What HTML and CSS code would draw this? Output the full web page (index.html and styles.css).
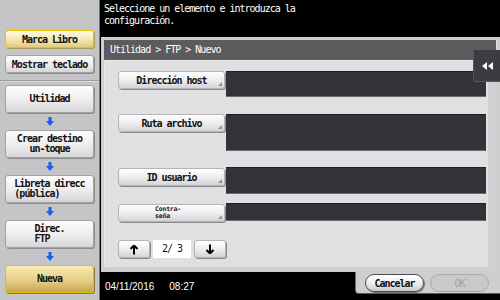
FILE: index.html
```html
<!DOCTYPE html>
<html lang="es">
<head>
<meta charset="utf-8">
<title>FTP Nuevo</title>
<link rel="stylesheet" href="styles.css">
</head>
<body>
<div class="screen">
  <aside class="side">
    <div class="side-top">
      <div class="sbtn yellow small">Marca Libro</div>
      <div class="sbtn small">Mostrar teclado</div>
    </div>
    <div class="side-flow">
      <div class="sbtn tall"><span>Utilidad</span></div>
      <svg class="flow-arrow" width="8" height="9" viewBox="0 0 8 9"><path d="M2.5 0h3v4H8L4 9 0 4h2.5z"/></svg>
      <div class="sbtn tall"><span>Crear destino<br>un-toque</span></div>
      <svg class="flow-arrow" width="8" height="9" viewBox="0 0 8 9"><path d="M2.5 0h3v4H8L4 9 0 4h2.5z"/></svg>
      <div class="sbtn tall"><span class="left">Libreta direcc<br>(pública)</span></div>
      <svg class="flow-arrow" width="8" height="9" viewBox="0 0 8 9"><path d="M2.5 0h3v4H8L4 9 0 4h2.5z"/></svg>
      <div class="sbtn tall"><span class="left">Direc.<br>FTP</span></div>
      <svg class="flow-arrow" width="8" height="9" viewBox="0 0 8 9"><path d="M2.5 0h3v4H8L4 9 0 4h2.5z"/></svg>
      <div class="sbtn tall current"><span>Nueva</span></div>
    </div>
  </aside>
  <main class="main">
    <div class="msg">Seleccione un elemento e introduzca la<br>configuración.</div>
    <section class="frame">
      <div class="title">Utilidad &gt; FTP &gt; Nuevo</div>
      <div class="content">
        <div class="rows">
          <div class="row r1"><div class="kbtn">Dirección host</div><div class="field f1"></div></div>
          <div class="row r2"><div class="kbtn">Ruta archivo</div><div class="field f2"></div></div>
          <div class="row r3"><div class="kbtn">ID usuario</div><div class="field f3"></div></div>
          <div class="row r4"><div class="kbtn tiny"><span>Contra-</span><span>seña</span></div><div class="field f4"></div></div>
          <div class="pager">
            <div class="pbtn"><svg width="10" height="11" viewBox="0 0 10 11"><path d="M5 1.5 1.5 5M5 1.5 8.5 5M5 1.5V10.5" fill="none" stroke="#000" stroke-width="2"/></svg></div>
            <div class="pnum">2/ 3</div>
            <div class="pbtn"><svg width="10" height="11" viewBox="0 0 10 11"><path d="M5 9.5 1.5 6M5 9.5 8.5 6M5 9.5V0.5" fill="none" stroke="#000" stroke-width="2"/></svg></div>
          </div>
        </div>
        <div class="gutter"></div>
      </div>
      <div class="tab"><svg width="11" height="8" viewBox="0 0 11 8"><path d="M0 4 5 0v8zM6 4l5-4v8z" fill="#fff"/></svg></div>
    </section>
    <footer class="foot">
      <div class="status"><span>04/11/2016</span><span>08:27</span></div>
      <div class="actions">
        <div class="pill">Cancelar</div>
        <div class="pill off">OK</div>
      </div>
    </footer>
  </main>
</div>
</body>
</html>
```
FILE: styles.css
```css
* { box-sizing: border-box; }
html, body { margin: 0; padding: 0; }
body {
  width: 500px;
  height: 300px;
  overflow: hidden;
  background: #000;
  font-family: "DejaVu Sans Mono", "Liberation Mono", monospace;
}
.screen {
  display: flex;
  width: 500px;
  height: 300px;
}

/* sidebar */
.side {
  width: 100px;
  height: 300px;
  background: #c5c5c7;
  border-right: 1px solid #77767a;
  display: flex;
  flex-direction: column;
}
.side-top {
  display: flex;
  flex-direction: column;
  gap: 7px;
  padding: 30px 0 0 5px;
  height: 81px;
  border-bottom: 1px solid #9c9c9e;
  box-shadow: 0 1px 0 #dcdcde;
}
.side-flow {
  display: flex;
  flex-direction: column;
  align-items: center;
  padding: 4px 5px 0 5px;
  gap: 4px;
}
.sbtn {
  width: 89px;
  border: 1px solid #a2a2a4;
  border-radius: 3px;
  background: linear-gradient(#fdfdfd, #ededee 55%, #d6d6d8);
  box-shadow: 1px 1px 0 #8e8e90;
  color: #111;
  font-weight: bold;
  font-size: 10px;
  letter-spacing: -1px;
  display: flex;
  align-items: center;
  justify-content: center;
  text-align: center;
  white-space: nowrap;
}
.sbtn.small { height: 18px; }
.sbtn.tall { height: 28px; line-height: 10px; }
.sbtn .left { text-align: left; }
.sbtn.yellow {
  border: 1px solid #e8c400;
  background: linear-gradient(#fffbe4, #f3e6b4 55%, #e2cc80);
  box-shadow: 1px 1px 0 #a89a60;
}
.sbtn.current {
  border: 1px solid #e6c000;
  background: linear-gradient(#f8eab0, #e6cf86 55%, #c8a850);
  box-shadow: 1px 1px 0 #8a7a40;
}
.flow-arrow { fill: #1b5ce8; display: block; }

/* main */
.main {
  width: 400px;
  height: 300px;
  display: flex;
  flex-direction: column;
}
.msg {
  height: 37px;
  padding: 3px 0 0 4px;
  color: #fff;
  font-size: 10px;
  line-height: 12px;
  letter-spacing: -1px;
  white-space: nowrap;
}
.frame {
  position: relative;
  margin-left: 1px;
  height: 235px;
  background: #cfcfd1;
  padding: 3px 3px 5px 3px;
  display: flex;
  flex-direction: column;
}
.title {
  height: 20px;
  background: #5c5b5e;
  border-right: 1px solid #e0e0e0;
  color: #fff;
  font-size: 10px;
  line-height: 20px;
  letter-spacing: -1px;
  padding-left: 6px;
}
.content {
  height: 207px;
  background: #e0dfe1;
  border-top: 1px solid #ececee;
  display: flex;
}
.rows {
  flex: 1;
  padding: 10px 0 0 13px;
  display: flex;
  flex-direction: column;
  border-left: 1px solid #ececee;
}
.row {
  display: flex;
  align-items: flex-start;
  gap: 1px;
}
.r2 { margin-top: 17px; }
.r3 { margin-top: 16px; }
.r4 { margin-top: 9px; }
.kbtn {
  position: relative;
  width: 107px;
  height: 18px;
  border: 1px solid #b4b4b6;
  border-radius: 3px;
  background: linear-gradient(#fefefe, #ececee 55%, #d4d4d6);
  box-shadow: 1px 1px 0 #8a8a8c;
  color: #111;
  font-weight: bold;
  font-size: 10px;
  letter-spacing: -1px;
  display: flex;
  align-items: center;
  justify-content: center;
  white-space: nowrap;
}
.kbtn::after {
  content: "";
  position: absolute;
  right: 2px;
  bottom: 2px;
  border-style: solid;
  border-width: 0 0 4px 4px;
  border-color: transparent transparent #8e8e90 transparent;
}
.r3 .kbtn { margin-top: 1px; }
.r4 .kbtn { margin-top: 1px; }
.kbtn.tiny {
  font-size: 6.5px;
  line-height: 7px;
  letter-spacing: -0.2px;
  flex-direction: column;
  align-items: flex-start;
  padding-left: 36px;
  justify-content: center;
}
.kbtn.tiny span { display: block; height: 7px; }
.field {
  width: 260px;
  background: #343236;
  border-top: 1px solid #1e1d20;
  border-bottom: 1px solid #6a696c;
}
.f1 { height: 26px; }
.f2 { height: 37px; }
.f3 { height: 27px; }
.f4 { height: 18px; }
.pager {
  margin-top: 18px;
  display: flex;
  align-items: center;
  gap: 3px;
}
.pbtn {
  width: 32px;
  height: 18px;
  border: 1px solid #b4b4b6;
  border-radius: 3px;
  background: linear-gradient(#fefefe, #ececee 55%, #d4d4d6);
  box-shadow: 1px 1px 0 #8a8a8c;
  display: flex;
  align-items: center;
  justify-content: center;
}
.pnum {
  width: 38px;
  height: 18px;
  background: #fff;
  color: #111;
  font-size: 10px;
  letter-spacing: -1px;
  line-height: 18px;
  text-align: center;
}
.gutter {
  width: 9px;
  margin-top: 21px;
  background: #d1d1d3;
}
.tab {
  position: absolute;
  left: 372px;
  top: 13px;
  width: 27px;
  height: 32px;
  background: #3c3b3f;
  border-left: 1px solid #57565a;
  border-bottom: 1px solid #57565a;
  border-bottom-left-radius: 3px;
  display: flex;
  justify-content: center;
  padding-top: 12px;
}
.tab svg { display: block; }

/* footer */
.foot {
  height: 28px;
  display: flex;
}
.status {
  width: 255px;
  background: #000;
  color: #fff;
  font-family: "Liberation Sans", Arial, sans-serif;
  font-size: 10px;
  display: flex;
  align-items: center;
  gap: 15px;
  padding-left: 5px;
}
.actions {
  width: 145px;
  height: 22px;
  background: #cfcfd1;
  border-left: 1px solid #6c6b6e;
  border-bottom: 1px solid #59585b;
  border-bottom-left-radius: 4px;
  display: flex;
  gap: 6px;
  padding: 2px 0 0 9px;
}
.pill {
  width: 59px;
  height: 18px;
  border: 1px solid #4a4a4c;
  border-radius: 9px;
  background: linear-gradient(#ffffff, #ececee 55%, #c8c8ca);
  box-shadow: 1px 1px 0 #7a7a7c;
  color: #111;
  font-weight: bold;
  font-size: 10px;
  letter-spacing: -1px;
  display: flex;
  align-items: center;
  justify-content: center;
}
.pill.off {
  border-color: #a9a9ab;
  background: #c9c9cb;
  box-shadow: none;
  color: #a2a2a4;
  font-weight: normal;
}
```
